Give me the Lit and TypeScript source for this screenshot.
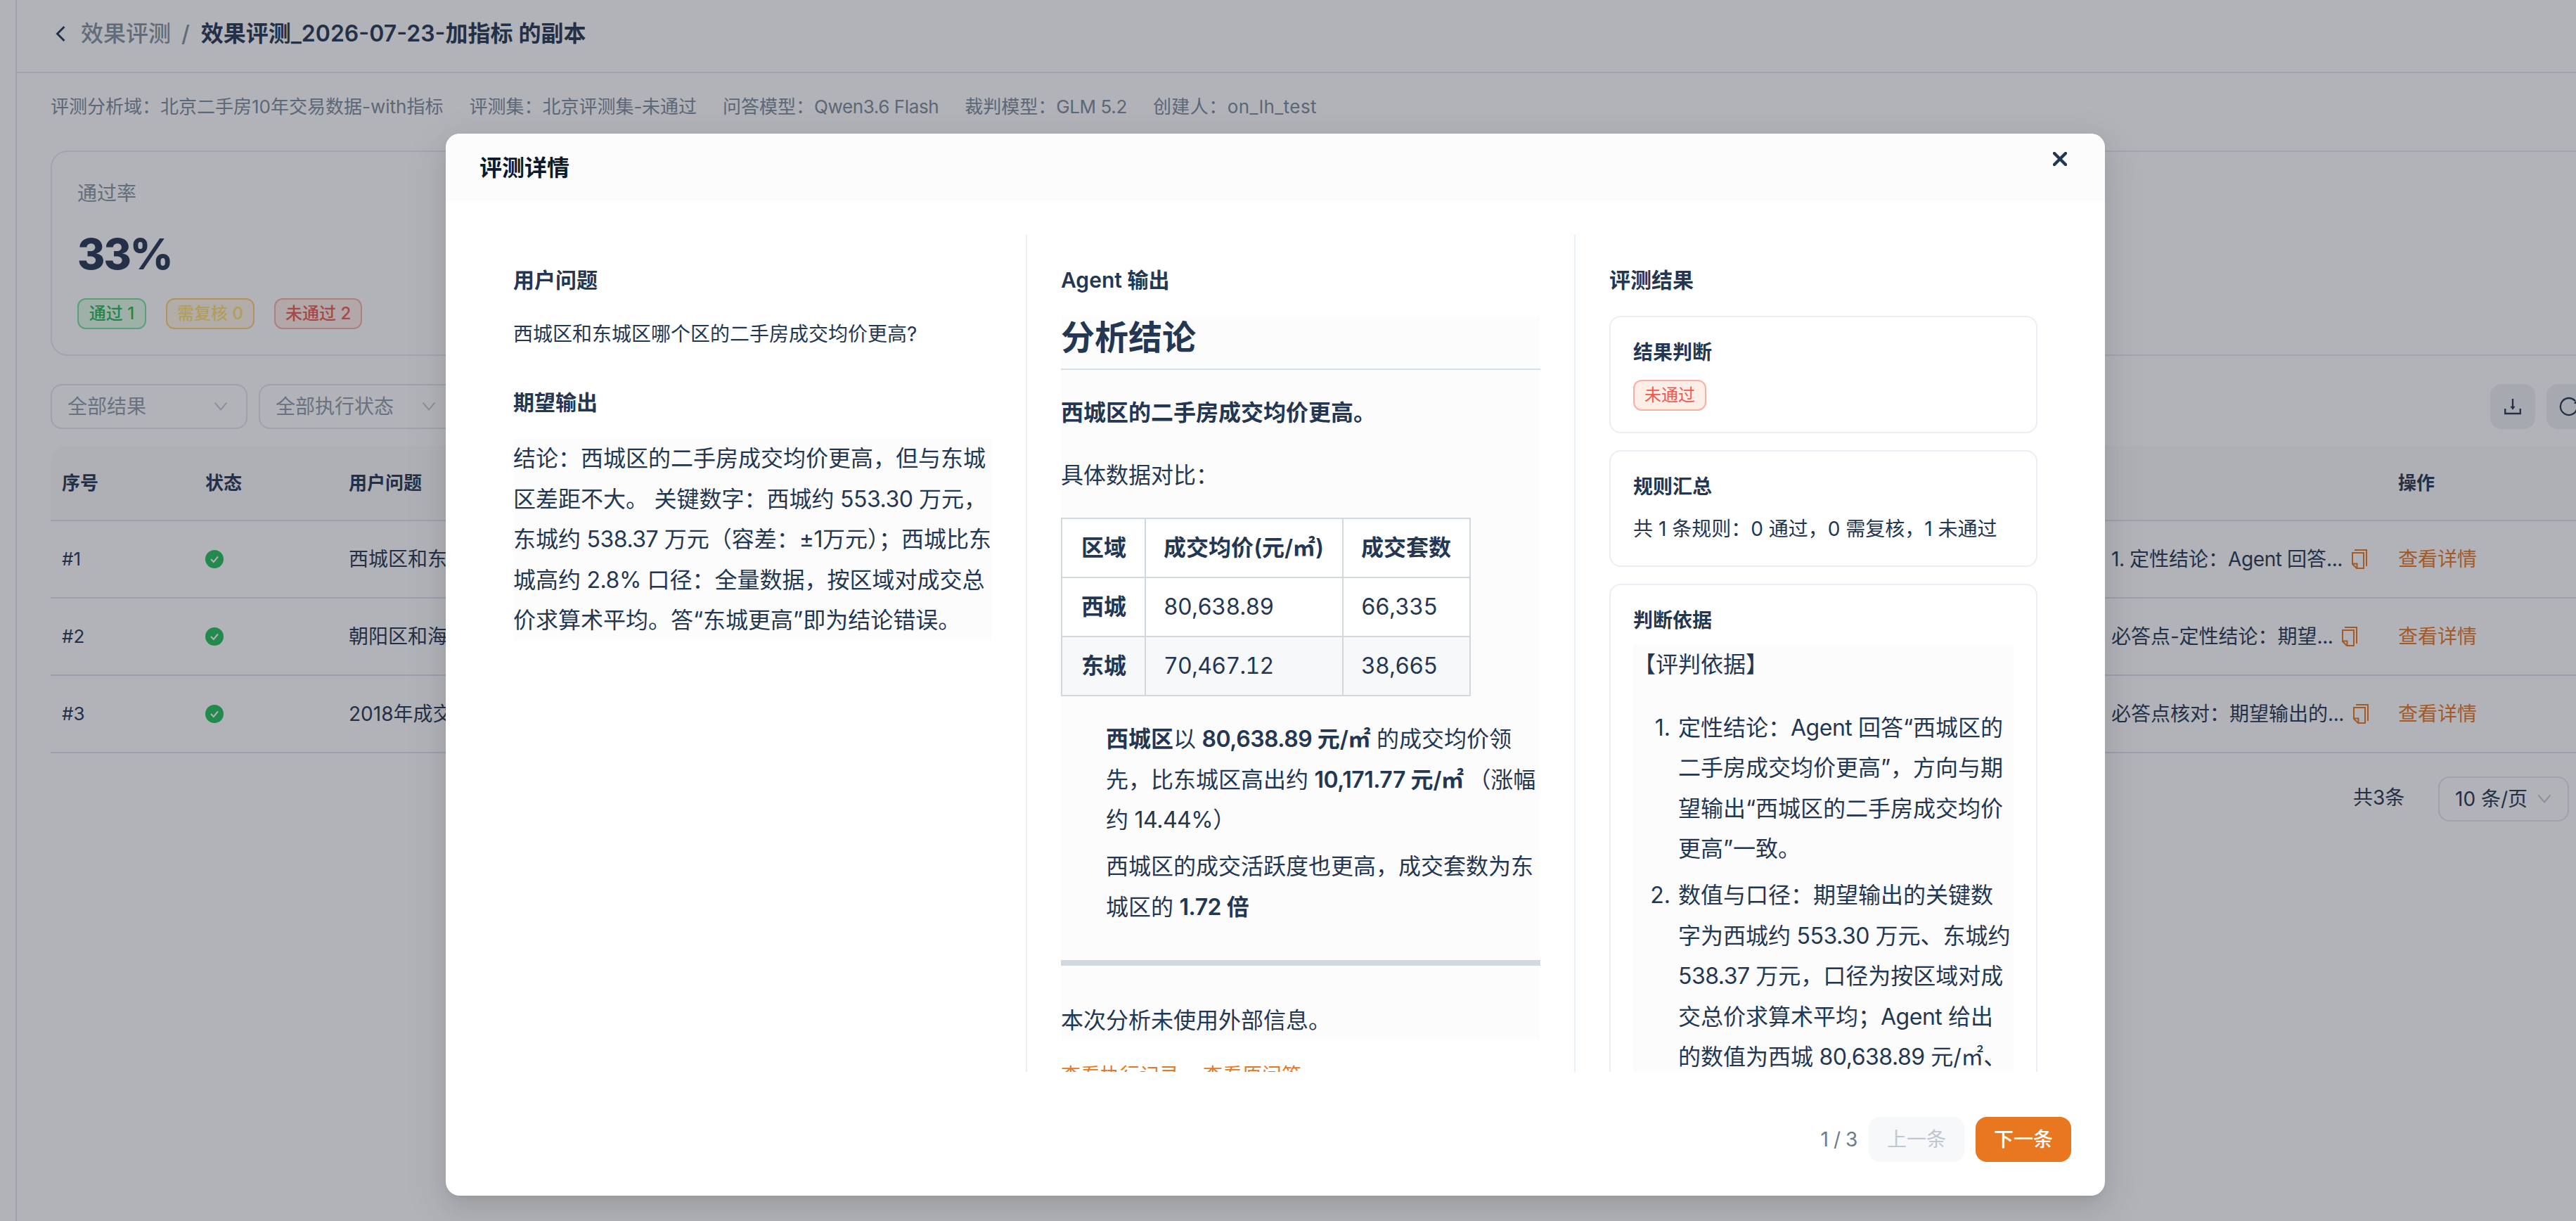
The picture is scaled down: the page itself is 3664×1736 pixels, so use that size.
import { LitElement, html, css } from "lit";
import { customElement } from "lit/decorators.js";

const rows = [
  { no: "#1", q: "西城区和东城区哪个区的二手房成交均价更高?", note: "1. 定性结论：Agent 回答..." },
  { no: "#2", q: "朝阳区和海淀区", note: "必答点-定性结论：期望..." },
  { no: "#3", q: "2018年成交", note: "必答点核对：期望输出的..." },
];

/* Splits a string into lines and sets its Latin runs slightly tighter than the Chinese text. */
const t = (s: string) =>
  s.split("\n").map((line, i) => html`${i ? html`<br>` : ""}${line.split(/([ -~±]+)/).map((part, k) => (k % 2 ? html`<span class="lat">${part}</span>` : part))}`);

const arrowDown = html`<svg class="arrow" viewBox="0 0 20 20" width="20" height="20"><path d="M1.5 4.5 L10 14.5 L18.5 4.5" fill="none" stroke="currentColor" stroke-width="2"/></svg>`;
const okIcon = html`<svg viewBox="0 0 26 26" width="26" height="26"><circle cx="13" cy="13" r="13" fill="#22c05b"/><path d="M8 13 L11.8 17 L18 9.5" fill="none" stroke="#fff" stroke-width="2"/></svg>`;
const copyIcon = html`<svg class="copy" viewBox="0 0 22 28" width="22" height="28"><path d="M4 1 H21 V24 M1 5 H17 V27 H7 L1 21 Z M1 20.5 H7.5 V27" fill="none" stroke="currentColor" stroke-width="2"/></svg>`;

@customElement("app-root")
export class AppRoot extends LitElement {
  static styles = css`
    :host {
      display: block; position: relative; width: 3664px; height: 1736px; overflow: hidden;
      background: #fff; color: #243752; font-family: Inter, "Noto Sans CJK SC", sans-serif; font-size: 28px;
      line-height: 44px; white-space: nowrap;
    }
    * { box-sizing: border-box; }
    svg { display: block; flex: none; }
    .lat { letter-spacing: -0.015em; white-space: pre; }
    .page { display: flex; height: 1736px; padding-left: 22px; }
    .main { width: 3780px; flex: none; border-left: 2px solid #e1e8f0; }
    .top { height: 104px; padding: 0 0 6px 54px; border-bottom: 2px solid #dee7f0; display: flex; align-items: center; font-size: 32px; font-weight: 600; }
    .back { margin: 0 21px 0 0; }
    .crumb { color: #8391a0; font-weight: 500; }
    .slash { color: #8391a0; font-weight: 500; margin: 0 16px 0 15px; }
    .content { padding: 26px 0 0 48px; }
    .meta { display: flex; gap: 37px; color: #7b8a9b; font-size: 26px; height: 44px; }
    .creator { letter-spacing: 0.45px; }
    .stat { margin-top: 40px; height: 292px; border: 2px solid #e2ebf2; border-radius: 24px; padding: 37px 36px; display: flex; flex-direction: column; align-items: flex-start; }
    .label { color: #8794a0; }
    .rate { font-size: 60px; font-weight: 800; line-height: 72px; margin-top: 28px; letter-spacing: -2px; }
    .tags { display: flex; gap: 28px; margin-top: 27px; }
    .tag { height: 44px; border: 2px solid; border-radius: 12px; font-size: 24px; line-height: 40px; padding: 0 14px; text-align: center; }
    .tag.ok { color: #22b856; border-color: #79dfa0; background: #e2fbe9; }
    .tag.warn { color: #ffdf70; border-color: #ffcd78; background: #fff6e6; }
    .tag.bad { color: #ee5a50; border-color: #f8b0a5; background: #ffede8; }
    .tags .tag { font-weight: 500; }
    .tags .ok { min-width: 98px; }
    .tags .warn { min-width: 126px; }
    .tags .bad { min-width: 125px; }
    .filters { display: flex; gap: 16px; margin-top: 40px; height: 64px; }
    .select { width: 280px; height: 64px; border: 2px solid #dfe6ec; border-radius: 16px; padding: 0 26px 0 22px; display: flex; align-items: center; justify-content: space-between; color: #8f9bac; flex: none; }
    .arrow { color: #c6cbd0; }
    .tools { display: flex; gap: 16px; margin-left: 2878px; }
    .tool { width: 64px; height: 64px; border-radius: 16px; background: #edf2f3; display: flex; align-items: center; justify-content: center; }
    .grid { margin-top: 24px; }
    .tr { display: grid; grid-template-columns: 204px 204px 2507px 408px 1fr; height: 110px; padding-left: 16px; align-items: center; border-bottom: 2px solid #dce4ee; }
    .tr.head { height: 107px; background: #fafafa; font-size: 26px; font-weight: 600; border-radius: 24px 0 0 0; }
    .no { font-size: 26px; }
    .q { overflow: hidden; width: 400px; }
    .note { display: flex; align-items: center; gap: 13px; }
    .copy { color: #e97720; }
    .link { color: #e97720; }
    .pager { display: flex; align-items: center; margin: 33px 0 0 3275px; }
    .total { width: 121px; margin-top: -4px; }
    .pager .select { width: 186px; color: #243752; padding: 0 23px 0 22px; }

    .mask { position: absolute; inset: 0; background: rgba(34, 38, 52, 0.35); display: flex; justify-content: center; padding: 190px 36px 0 0; }
    .modal { width: 2360px; height: 1510px; background: #fff; border-radius: 20px; overflow: hidden; display: flex; flex-direction: column; box-shadow: 0 12px 32px rgba(0,0,0,.08), 0 6px 12px -8px rgba(0,0,0,.12), 0 18px 56px 16px rgba(0,0,0,.05); }
    .mhead { height: 96px; background: #fcfcfc; padding: 2px 54px 0 48px; display: flex; align-items: center; justify-content: space-between; font-size: 32px; font-weight: 600; color: #0c1a2c; }
    .close { margin-bottom: 26px; color: #243752; }
    .body { margin: 48px 48px 0; height: 1190px; overflow: hidden; display: grid; grid-template-columns: 779px 780px 1fr; }
    .col { padding: 42px 48px 0; height: 1190px; }
    .line { border-right: 2px solid #e8eff5; }
    h3 { margin: 0; font-size: 30px; line-height: 44px; font-weight: 600; }
    .question { margin: 33px 0 31px; height: 66px; }
    .md { background: #fcfcfc; font-size: 32px; line-height: 57.6px; }
    .expect { margin-top: 29px; }
    .agent { margin-top: 29px; height: 1030px; }
    h1 { margin: 0; font-size: 48px; line-height: 62px; font-weight: 600; height: 77px; border-bottom: 2px solid #d9e1e8; }
    p { margin: 0; }
    .p1 { font-weight: 600; margin-top: 32px; }
    .p2 { margin-top: 31px; }
    table { border-collapse: collapse; margin-top: 32px; background: #fff; table-layout: fixed; width: 583px; }
    td { border: 2px solid #d1d9e0; height: 84px; padding: 0 0 0 25px; line-height: 57.6px; font-variant-numeric: tabular-nums; letter-spacing: -0.02em; }
    td:nth-child(1) { width: 119px; padding-left: 27px; }
    td:nth-child(2) { width: 281px; }
    .th td, td b { letter-spacing: 0; }
    tr:nth-child(3) td { background: #f6f8fa; }
    b, .th td { font-weight: 600; }
    .items { padding-left: 64px; margin-top: 32px; }
    .items p + p { margin-top: 8px; }
    .gap { margin-right: 6px; }
    .hr { height: 8px; background: #d1d9e0; margin: 47px 0 49px; }
    .links { display: flex; gap: 34px; color: #e97720; margin-top: 28px; line-height: 44px; }
    .card { border: 2px solid #e9eff5; border-radius: 16px; padding: 30px 32px 0; height: 166px; margin-top: 24px; line-height: 40px; }
    h3 + .card { margin-top: 29px; height: 167px; }
    .card.long { height: 900px; }
    .card .tag { display: inline-block; margin-top: 19px; }
    .ct { font-weight: 600; line-height: 40px; }
    .rule { margin-top: 20px; }
    .judge { margin-top: 14px; height: 800px; }
    .li { padding-left: 64px; position: relative; }
    .l1 { margin-top: 32px; }
    .l2 { margin-top: 8px; }
    .num { position: absolute; left: 0; width: 53px; text-align: right; }
    .foot { display: flex; justify-content: flex-end; align-items: center; gap: 16px; margin: 64px 48px 0 0; height: 64px; color: #6f7b8c; }
    .btn { width: 136px; height: 64px; border-radius: 16px; text-align: center; line-height: 64px; }
    .prev { background: #f6f8fa; color: #bfc7d0; }
    .next { background: #e97720; color: #fff; font-weight: 500; }
  `;

  private page() {
    return html`<div class="page"><div class="main">
      <div class="top">
        <svg class="back" viewBox="0 0 16 24" width="16" height="24"><path d="M13.5 2 L3.5 12 L13.5 22" fill="none" stroke="currentColor" stroke-width="3"/></svg>
        <span class="crumb">效果评测</span><span class="slash">/</span><span>效果评测_2026-07-23-加指标 的副本</span>
      </div>
      <div class="content">
        <div class="meta"><span>评测分析域：北京二手房10年交易数据-with指标</span><span>${t("评测集：北京评测集-未通过")}</span><span>${t("问答模型：Qwen3.6 Flash")}</span><span>${t("裁判模型：GLM 5.2")}</span><span class="creator">创建人：on_lh_test</span></div>
        <div class="stat">
          <div class="label">通过率</div>
          <div class="rate">33%</div>
          <div class="tags"><span class="tag ok">通过 1</span><span class="tag warn">需复核 0</span><span class="tag bad">未通过 2</span></div>
        </div>
        <div class="filters">
          <div class="select">全部结果${arrowDown}</div>
          <div class="select">全部执行状态${arrowDown}</div>
          <div class="tools">
            <div class="tool"><svg viewBox="0 0 28 28" width="28" height="28"><path d="M3.2 17 V24 H24.8 V17" fill="none" stroke="currentColor" stroke-width="2.3"/><path d="M14 3 V15" stroke="currentColor" stroke-width="2.3"/><path d="M10.4 13.7 H17.6 L14 18.8 Z" fill="currentColor"/></svg></div>
            <div class="tool"><svg viewBox="0 0 28 28" width="28" height="28"><path d="M25 18.5 A12 12 0 1 1 23 6.2" fill="none" stroke="currentColor" stroke-width="2.3"/><path d="M26 4 V11 L20.8 9.3 Z" fill="currentColor"/></svg></div>
          </div>
        </div>
        <div class="grid">
          <div class="tr head"><span>序号</span><span>状态</span><span>用户问题</span><span></span><span>操作</span></div>
          ${rows.map((r) => html`<div class="tr"><span class="no">${r.no}</span><span>${okIcon}</span><span class="q">${r.q}</span><span class="note"><span>${t(r.note)}</span>${copyIcon}</span><span class="link">查看详情</span></div>`)}
        </div>
        <div class="pager"><span class="total">共3条</span><div class="select">10 条/页${arrowDown}</div></div>
      </div>
    </div></div>`;
  }

  render() {
    return html`${this.page()}
      <div class="mask"><div class="modal">
        <div class="mhead"><span>评测详情</span><svg class="close" viewBox="0 0 20 20" width="20" height="20"><path d="M2 2 L18 18 M18 2 L2 18" stroke="currentColor" stroke-width="4.4" stroke-linecap="round"/></svg></div>
        <div class="body">
          <div class="col line">
            <h3>用户问题</h3>
            <div class="question">西城区和东城区哪个区的二手房成交均价更高?</div>
            <h3>期望输出</h3>
            <div class="md expect">${t("结论：西城区的二手房成交均价更高，但与东城\n区差距不大。 关键数字：西城约 553.30 万元，\n东城约 538.37 万元（容差：±1万元）；西城比东\n城高约 2.8% 口径：全量数据，按区域对成交总\n价求算术平均。答“东城更高”即为结论错误。")}</div>
          </div>
          <div class="col line">
            <h3>Agent 输出</h3>
            <div class="md agent">
              <h1>分析结论</h1>
              <p class="p1">西城区的二手房成交均价更高。</p>
              <p class="p2">具体数据对比：</p>
              <table>
                <tr class="th"><td>区域</td><td>${t("成交均价(元/㎡)")}</td><td>成交套数</td></tr>
                <tr><td><b>西城</b></td><td>80,638.89</td><td>66,335</td></tr>
                <tr><td><b>东城</b></td><td>70,467.12</td><td>38,665</td></tr>
              </table>
              <div class="items">
                <p><b>西城区</b>${t("以 ")}<b>${t("80,638.89 元/㎡")}</b>${t(" 的成交均价领\n先，比东城区高出约 ")}<b class="gap">${t("10,171.77 元/㎡")}</b>${t("（涨幅\n约 14.44%）")}</p>
                <p>${t("西城区的成交活跃度也更高，成交套数为东\n城区的 ")}<b>${t("1.72 倍")}</b></p>
              </div>
              <div class="hr"></div>
              <p>本次分析未使用外部信息。</p>
            </div>
            <div class="links"><span>查看执行记录</span><span>查看原问答</span></div>
          </div>
          <div class="col">
            <h3>评测结果</h3>
            <div class="card"><div class="ct">结果判断</div><span class="tag bad">未通过</span></div>
            <div class="card"><div class="ct">规则汇总</div><div class="rule">共 1 条规则：0 通过，0 需复核，1 未通过</div></div>
            <div class="card long"><div class="ct">判断依据</div>
              <div class="md judge">
                <p>【评判依据】</p>
                <p class="li l1"><span class="num">1.</span>${t("定性结论：Agent 回答“西城区的\n二手房成交均价更高”，方向与期\n望输出“西城区的二手房成交均价\n更高”一致。")}</p>
                <p class="li l2"><span class="num">2.</span>${t("数值与口径：期望输出的关键数\n字为西城约 553.30 万元、东城约\n538.37 万元，口径为按区域对成\n交总价求算术平均；Agent 给出\n的数值为西城 80,638.89 元/㎡、")}</p>
              </div>
            </div>
          </div>
        </div>
        <div class="foot"><span>${t("1 / 3")}</span><div class="btn prev">上一条</div><div class="btn next">下一条</div></div>
      </div></div>`;
  }
}
